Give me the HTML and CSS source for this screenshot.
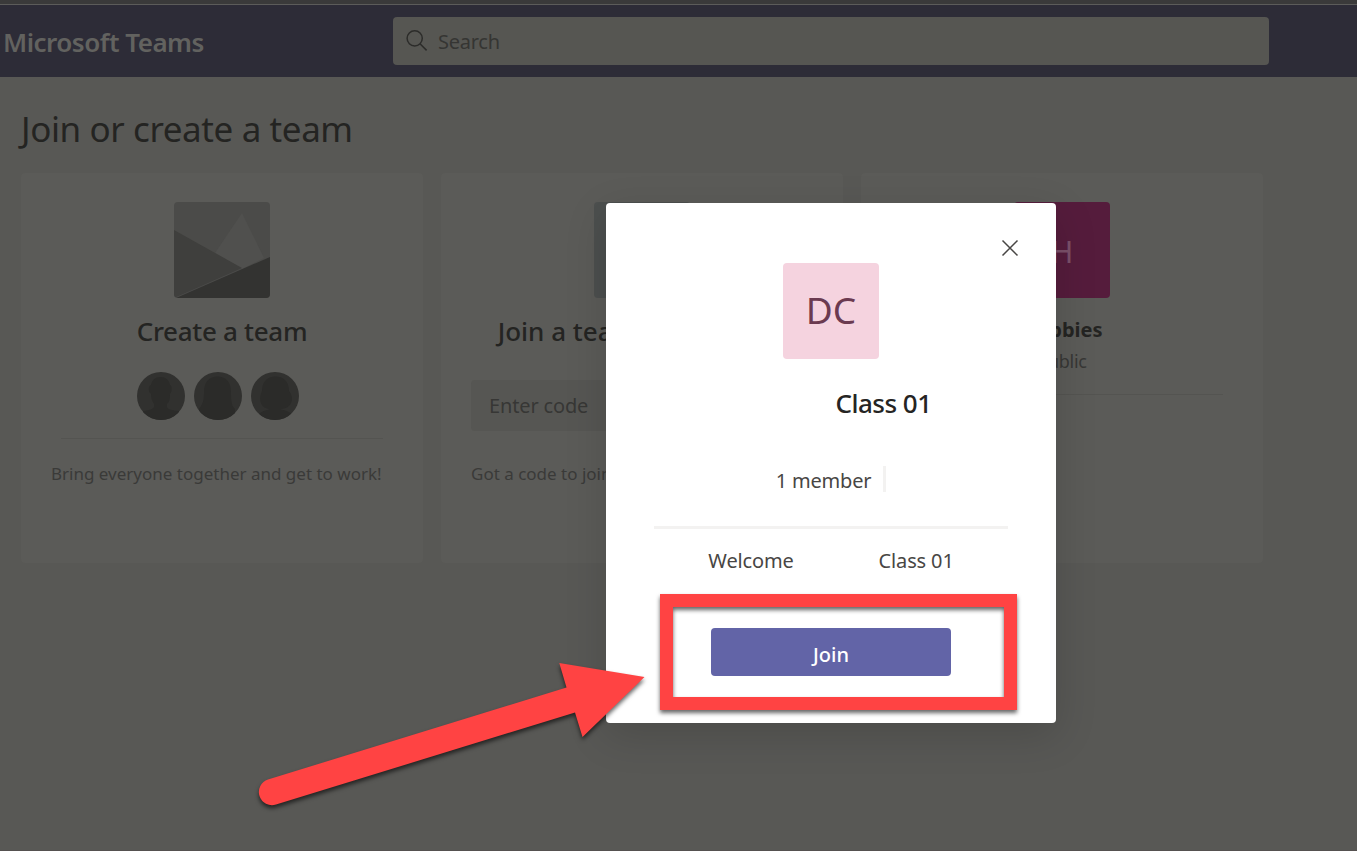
FILE: index.html
```html
<!DOCTYPE html>
<html lang="en">
<head>
    <meta charset="UTF-8">
    <meta name="viewport" content="width=device-width, initial-scale=1.0">
    <title>Microsoft Teams</title>
    <link rel="stylesheet" href="styles.css">
</head>
<body>
    <div class="window-edge"></div>
    <header class="topbar">
        <div class="brand">Microsoft Teams</div>
        <div class="search">
            <svg class="search-icon" width="24" height="24" viewBox="0 0 24 24">
                <circle cx="9.7" cy="9.3" r="7.6"/>
                <path d="M15 14.8l6.6 6.6"/>
            </svg>
            <span>Search</span>
        </div>
    </header>

    <main class="content">
        <h1>Join or create a team</h1>
        <div class="cards">
            <section class="card">
                <svg class="tile" width="96" height="96" viewBox="0 0 96 96">
                    <rect width="96" height="96" fill="#4b4b49"/>
                    <path d="M68 11L41 51l27 16 22-11z" fill="#50504e"/>
                    <path d="M0 28l68 38L0 96z" fill="#3f3f3d"/>
                    <path d="M2 96l94-41v41z" fill="#333331"/>
                </svg>
                <h2 class="create-title">Create a team</h2>
                <div class="avatars">
                    <svg class="avatar" width="48" height="48" viewBox="0 0 48 48">
                        <path d="M14 13C15 8 18 5 23.500 5S32 8 33 13c2.500 1 2 7 0 9 0 6-1 8-3 10v3c1 3 5 3 12 4v9H6v-9c6-1 9-1 11-4v-3c-2-3-3-6-3-10-3-2-3-8 0-9z"/>
                    </svg>
                    <svg class="avatar" width="48" height="48" viewBox="0 0 48 48">
                        <path d="M10 20C10 9 16 4.500 23.500 4.500S37 9 37 20s1 14 4 17v11H5V37c4-5 5-9 5-17z"/>
                    </svg>
                    <svg class="avatar" width="48" height="48" viewBox="0 0 48 48">
                        <path d="M11 19C11 9 17 4.500 24.500 4.500S38 9 38 19c5 5 4 16-5 17.500-3 .5-3 .5-3 1 5 1 8 2 10 4V48H8v-6c3-3 6-3.500 10-4.500 0-.5 0-.5-2-1C8 35 8 24 11 19z"/>
                    </svg>
                </div>
                <div class="divider"></div>
                <p class="desc create-desc">Bring everyone together and get to work!</p>
            </section>

            <section class="card">
                <div class="tile code-tile"></div>
                <h2>Join a team with a code</h2>
                <div class="code-input">Enter code</div>
                <p class="desc join-desc">Got a code to join a team? Enter it</p>
            </section>

            <section class="card">
                <div class="tile team-tile">H</div>
                <h3>Hobbies</h3>
                <p class="privacy">Public</p>
                <div class="divider"></div>
            </section>
        </div>
    </main>

    <div class="modal">
        <svg class="close" width="18" height="18" viewBox="0 0 18 18">
            <path d="M1.500 1.500l15 15M16.500 1.500l-15 15"/>
        </svg>
        <div class="tile class-tile">DC</div>
        <h2 class="class-name">Class 01</h2>
        <div class="members">1 member</div>
        <div class="modal-divider"></div>
        <div class="welcome"><span>Welcome</span><span>Class 01</span></div>
        <button class="join">Join</button>
    </div>

    <div class="highlight"></div>
    <svg class="arrow" width="420" height="180" viewBox="0 0 420 180">
        <path d="M28 139.500L326.500 47.500 319.300 23 404.500 37 342.500 97 335 72.500 36 164.500A13 13 0 0 1 28 139.500z"/>
    </svg>
</body>
</html>
```
FILE: styles.css
```css
* {
    box-sizing: border-box;
}

body {
    margin: 0;
    height: 851px;
    overflow: hidden;
    position: relative;
    background-color: #585855;
    border-bottom: 1px solid #555150;
    font-family: "Noto Sans", "Open Sans", sans-serif;
    color: #242422;
}

h1, h2, h3, p {
    margin: 0;
}

.window-edge {
    height: 5px;
    background-color: #3a3a3a;
    border-bottom: 1px solid #5c5c5a;
}

.topbar {
    display: flex;
    align-items: center;
    height: 72px;
    background-color: #2d2c37;
}

.brand {
    width: 393px;
    padding: 2px 0 0 3px;
    font-size: 26px;
    font-weight: 600;
    color: #62625f;
    letter-spacing: -0.5px;
}

.search {
    display: flex;
    align-items: center;
    gap: 9px;
    width: 876px;
    height: 48px;
    padding-left: 12px;
    border-radius: 4px;
    background-color: #565652;
    font-size: 20px;
    letter-spacing: -0.25px;
    color: #353533;
}

.search-icon {
    fill: none;
    stroke: #2c2c2a;
    stroke-width: 1.5;
}

.content {
    padding: 28px 21px 0;
}

h1 {
    font-size: 35px;
    line-height: 48px;
    font-weight: 400;
    letter-spacing: -0.4px;
    margin-bottom: 20px;
}

.cards {
    display: flex;
    gap: 18px;
}

.card {
    display: flex;
    flex-direction: column;
    align-items: center;
    width: 402px;
    height: 390px;
    padding: 29px 30px 0;
    border-radius: 4px;
    background-color: #5b5b58;
}

.tile {
    flex: none;
    width: 96px;
    height: 96px;
    border-radius: 4px;
    overflow: hidden;
}

.card h2 {
    margin-top: 15px;
    font-size: 26px;
    line-height: 36px;
    font-weight: 500;
    white-space: nowrap;
}

.card .create-title {
    letter-spacing: -0.3px;
}

.avatars {
    display: flex;
    gap: 9px;
    width: 162px;
    margin: 23px 8px 18px 0;
}

.avatar {
    border-radius: 50%;
    background-color: #31312f;
    fill: #2b2b29;
}

.divider {
    width: 322px;
    height: 1px;
    background-color: #545451;
}

.desc {
    font-size: 17px;
    line-height: 24px;
    color: #3a3a38;
    white-space: nowrap;
}

.create-desc {
    align-self: flex-start;
    margin-top: 23px;
}

.join-desc {
    align-self: flex-start;
    margin-top: 31px;
}

.code-tile {
    background-color: #4c4f4e;
}

.code-input {
    width: 342px;
    height: 51px;
    margin-top: 31px;
    padding-left: 18px;
    border-radius: 4px;
    background-color: #565653;
    font-size: 20px;
    line-height: 51px;
    letter-spacing: -0.15px;
    color: #373735;
}

.team-tile {
    background-color: #551c3c;
    color: #7b5069;
    font-size: 31px;
    line-height: 99px;
    text-align: center;
}

h3 {
    margin-top: 18px;
    font-size: 20px;
    line-height: 28px;
    font-weight: 700;
}

.privacy {
    margin: 5px 0 21px;
    font-size: 18px;
    line-height: 24px;
    letter-spacing: -0.3px;
    color: #373735;
}

.modal {
    position: absolute;
    left: 606px;
    top: 203px;
    display: flex;
    flex-direction: column;
    align-items: center;
    width: 450px;
    height: 520px;
    padding: 60px 48px 0;
    border-radius: 4px;
    background-color: #fff;
    box-shadow: 0 12px 42px rgba(0, 0, 0, 0.15);
}

.close {
    position: absolute;
    top: 36px;
    right: 37px;
    stroke: #484644;
    stroke-width: 1.5;
}

.class-tile {
    background-color: #f5d3df;
    color: #6b3a50;
    font-size: 37px;
    line-height: 93px;
    text-align: center;
}

.class-name {
    margin: 26px 0 0 105px;
    font-size: 26px;
    line-height: 36px;
    font-weight: 500;
    letter-spacing: -0.5px;
    color: #252423;
}

.members {
    display: flex;
    margin: 45px 0 34px;
    padding-right: 12px;
    border-right: 3px solid #f3f2f1;
    height: 26px;
    font-size: 20px;
    line-height: 30px;
    letter-spacing: -0.2px;
    color: #484644;
}

.modal-divider {
    width: 354px;
    height: 3px;
    background-color: #f3f2f1;
}

.welcome {
    display: flex;
    gap: 85px;
    margin: 18px 0 53px;
    font-size: 20px;
    line-height: 28px;
    letter-spacing: -0.15px;
    color: #484644;
}

.join {
    width: 240px;
    height: 48px;
    padding: 4px 0 0;
    border: none;
    border-radius: 4px;
    background-color: #6264a7;
    color: #fff;
    font-family: inherit;
    font-size: 20px;
    font-weight: 500;
}

/* callouts drawn over the dialog */
.highlight {
    position: absolute;
    left: 660px;
    top: 594px;
    width: 357px;
    height: 116px;
    border: 13px solid #ff4343;
    filter: drop-shadow(0 3px 2px rgba(0, 0, 0, 0.6));
}

.arrow {
    position: absolute;
    left: 240px;
    top: 640px;
    fill: #ff4343;
    filter: drop-shadow(0 3px 2px rgba(0, 0, 0, 0.6));
}
```
